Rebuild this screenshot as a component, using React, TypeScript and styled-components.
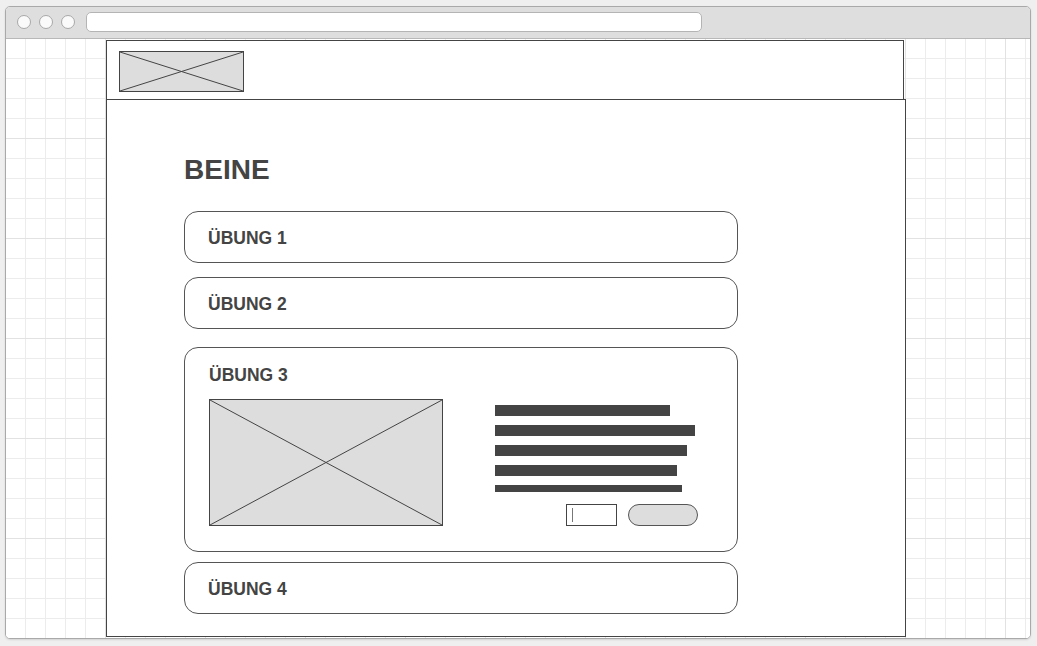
import React from "react";
import styled, { createGlobalStyle } from "styled-components";

const Global = createGlobalStyle`
  html, body { margin: 0; padding: 0; background: #efefef; }
  body { font-family: "Liberation Sans", Arial, sans-serif; color: #444; }
  * { box-sizing: border-box; }
`;

const Page = styled.div`
  width: 1037px;
  height: 646px;
  padding: 6px 0 0 5px;
  overflow: hidden;
`;

const BrowserFrame = styled.div`
  width: 1026px;
  height: 633px;
  border: 1px solid #a9a9a9;
  border-radius: 5px;
  overflow: hidden;
  display: flex;
  flex-direction: column;
  background: #fff;
  box-shadow: 0 1px 2px rgba(0, 0, 0, 0.12);
`;

const TitleBar = styled.div`
  height: 32px;
  flex: none;
  background: #dedede;
  border-bottom: 1px solid #b8b8b8;
  display: flex;
  align-items: center;
  padding: 0 0 1px 11px;
`;

const Dot = styled.span`
  width: 14px;
  height: 14px;
  border-radius: 50%;
  background: #fafafa;
  border: 1px solid #a8a8a8;
  margin-right: 8px;
  flex: none;
`;

const UrlBar = styled.div`
  margin-left: 3px;
  width: 616px;
  height: 20px;
  background: #fff;
  border: 1px solid #b4b4b4;
  border-radius: 5px;
`;

const Viewport = styled.div`
  flex: 1;
  padding: 1px 0 0 100px;
  background-color: #fff;
  background-image:
    linear-gradient(to right, #e2e2e2 1px, transparent 1px),
    linear-gradient(to bottom, #e2e2e2 1px, transparent 1px),
    linear-gradient(to right, #ececec 1px, transparent 1px),
    linear-gradient(to bottom, #ececec 1px, transparent 1px);
  background-size: 100px 100px, 100px 100px, 20px 20px, 20px 20px;
  background-position: 99px 99px, 99px 99px, 19px 19px, 19px 19px;
`;

const Header = styled.header`
  width: 798px;
  height: 60px;
  border: 1px solid #444;
  background: #fff;
  padding: 10px 12px;
`;

const Placeholder = styled.div<{ $w: number; $h: number }>`
  width: ${(p) => p.$w}px;
  height: ${(p) => p.$h}px;
  border: 1px solid #444;
  background: #dddddd;
  flex: none;
  svg { display: block; width: 100%; height: 100%; }
`;

const Main = styled.main`
  margin-top: -1px;
  width: 800px;
  height: 538px;
  border: 1px solid #444;
  background: #fff;
  padding: 54px 0 0 77px;
  display: flex;
  flex-direction: column;
  align-items: flex-start;
`;

const Title = styled.h1`
  margin: 0;
  font-size: 28px;
  line-height: 32px;
  font-weight: 700;
  color: #444;
`;

const Card = styled.section<{ $top: number }>`
  margin-top: ${(p) => p.$top}px;
  width: 554px;
  border: 1px solid #555;
  border-radius: 14px;
  background: #fff;
`;

const CardHead = styled.div`
  height: 50px;
  display: flex;
  align-items: center;
  padding: 2px 0 0 23px;
`;

const CardTitle = styled.h2`
  margin: 0;
  font-size: 17.5px;
  line-height: 20px;
  font-weight: 700;
  color: #444;
`;

const OpenCard = styled.div`
  padding: 17px 39px 25px 24px;
  display: flex;
  flex-direction: column;
  gap: 14px;
`;

const CardBody = styled.div`
  display: flex;
  align-items: flex-start;
`;

const Details = styled.div`
  margin-left: 52px;
  width: 203px;
  flex: none;
  padding-top: 6px;
  display: flex;
  flex-direction: column;
`;

const Bars = styled.div`
  display: flex;
  flex-direction: column;
  gap: 9px;
`;

const Bar = styled.div<{ $h?: number }>`
  height: ${(p) => p.$h ?? 11}px;
  background: #444;
`;

const Actions = styled.div`
  margin-top: 12px;
  display: flex;
  justify-content: flex-end;
  gap: 11px;
`;

const Input = styled.div`
  width: 51px;
  height: 22px;
  border: 1px solid #444;
  background: #fff;
  padding: 3px 0 0 5px;
`;

const Caret = styled.div`
  width: 1px;
  height: 14px;
  background: #777;
`;

const Pill = styled.div`
  width: 70px;
  height: 22px;
  border: 1px solid #555;
  border-radius: 11px;
  background: #dddddd;
`;

const Cross = () => (
  <svg viewBox="0 0 100 100" preserveAspectRatio="none">
    <line x1="0" y1="0" x2="100" y2="100" stroke="#444" strokeWidth="1" vectorEffect="non-scaling-stroke" />
    <line x1="100" y1="0" x2="0" y2="100" stroke="#444" strokeWidth="1" vectorEffect="non-scaling-stroke" />
  </svg>
);

const bars = [175, 200, 192, 182, 187];

export default function App() {
  return (
    <>
      <Global />
      <Page>
        <BrowserFrame>
          <TitleBar>
            <Dot />
            <Dot />
            <Dot />
            <UrlBar />
          </TitleBar>
          <Viewport>
            <Header>
              <Placeholder $w={125} $h={41}>
                <Cross />
              </Placeholder>
            </Header>
            <Main>
              <Title>BEINE</Title>
              <Card $top={25}>
                <CardHead>
                  <CardTitle>ÜBUNG 1</CardTitle>
                </CardHead>
              </Card>
              <Card $top={14}>
                <CardHead>
                  <CardTitle>ÜBUNG 2</CardTitle>
                </CardHead>
              </Card>
              <Card $top={18}>
                <OpenCard>
                  <CardTitle>ÜBUNG 3</CardTitle>
                  <CardBody>
                    <Placeholder $w={234} $h={127}>
                      <Cross />
                    </Placeholder>
                    <Details>
                      <Bars>
                        {bars.map((w, i) => (
                          <Bar key={i} $h={i === 4 ? 7 : 11} style={{ width: w }} />
                        ))}
                      </Bars>
                      <Actions>
                        <Input>
                          <Caret />
                        </Input>
                        <Pill />
                      </Actions>
                    </Details>
                  </CardBody>
                </OpenCard>
              </Card>
              <Card $top={10}>
                <CardHead>
                  <CardTitle>ÜBUNG 4</CardTitle>
                </CardHead>
              </Card>
            </Main>
          </Viewport>
        </BrowserFrame>
      </Page>
    </>
  );
}
